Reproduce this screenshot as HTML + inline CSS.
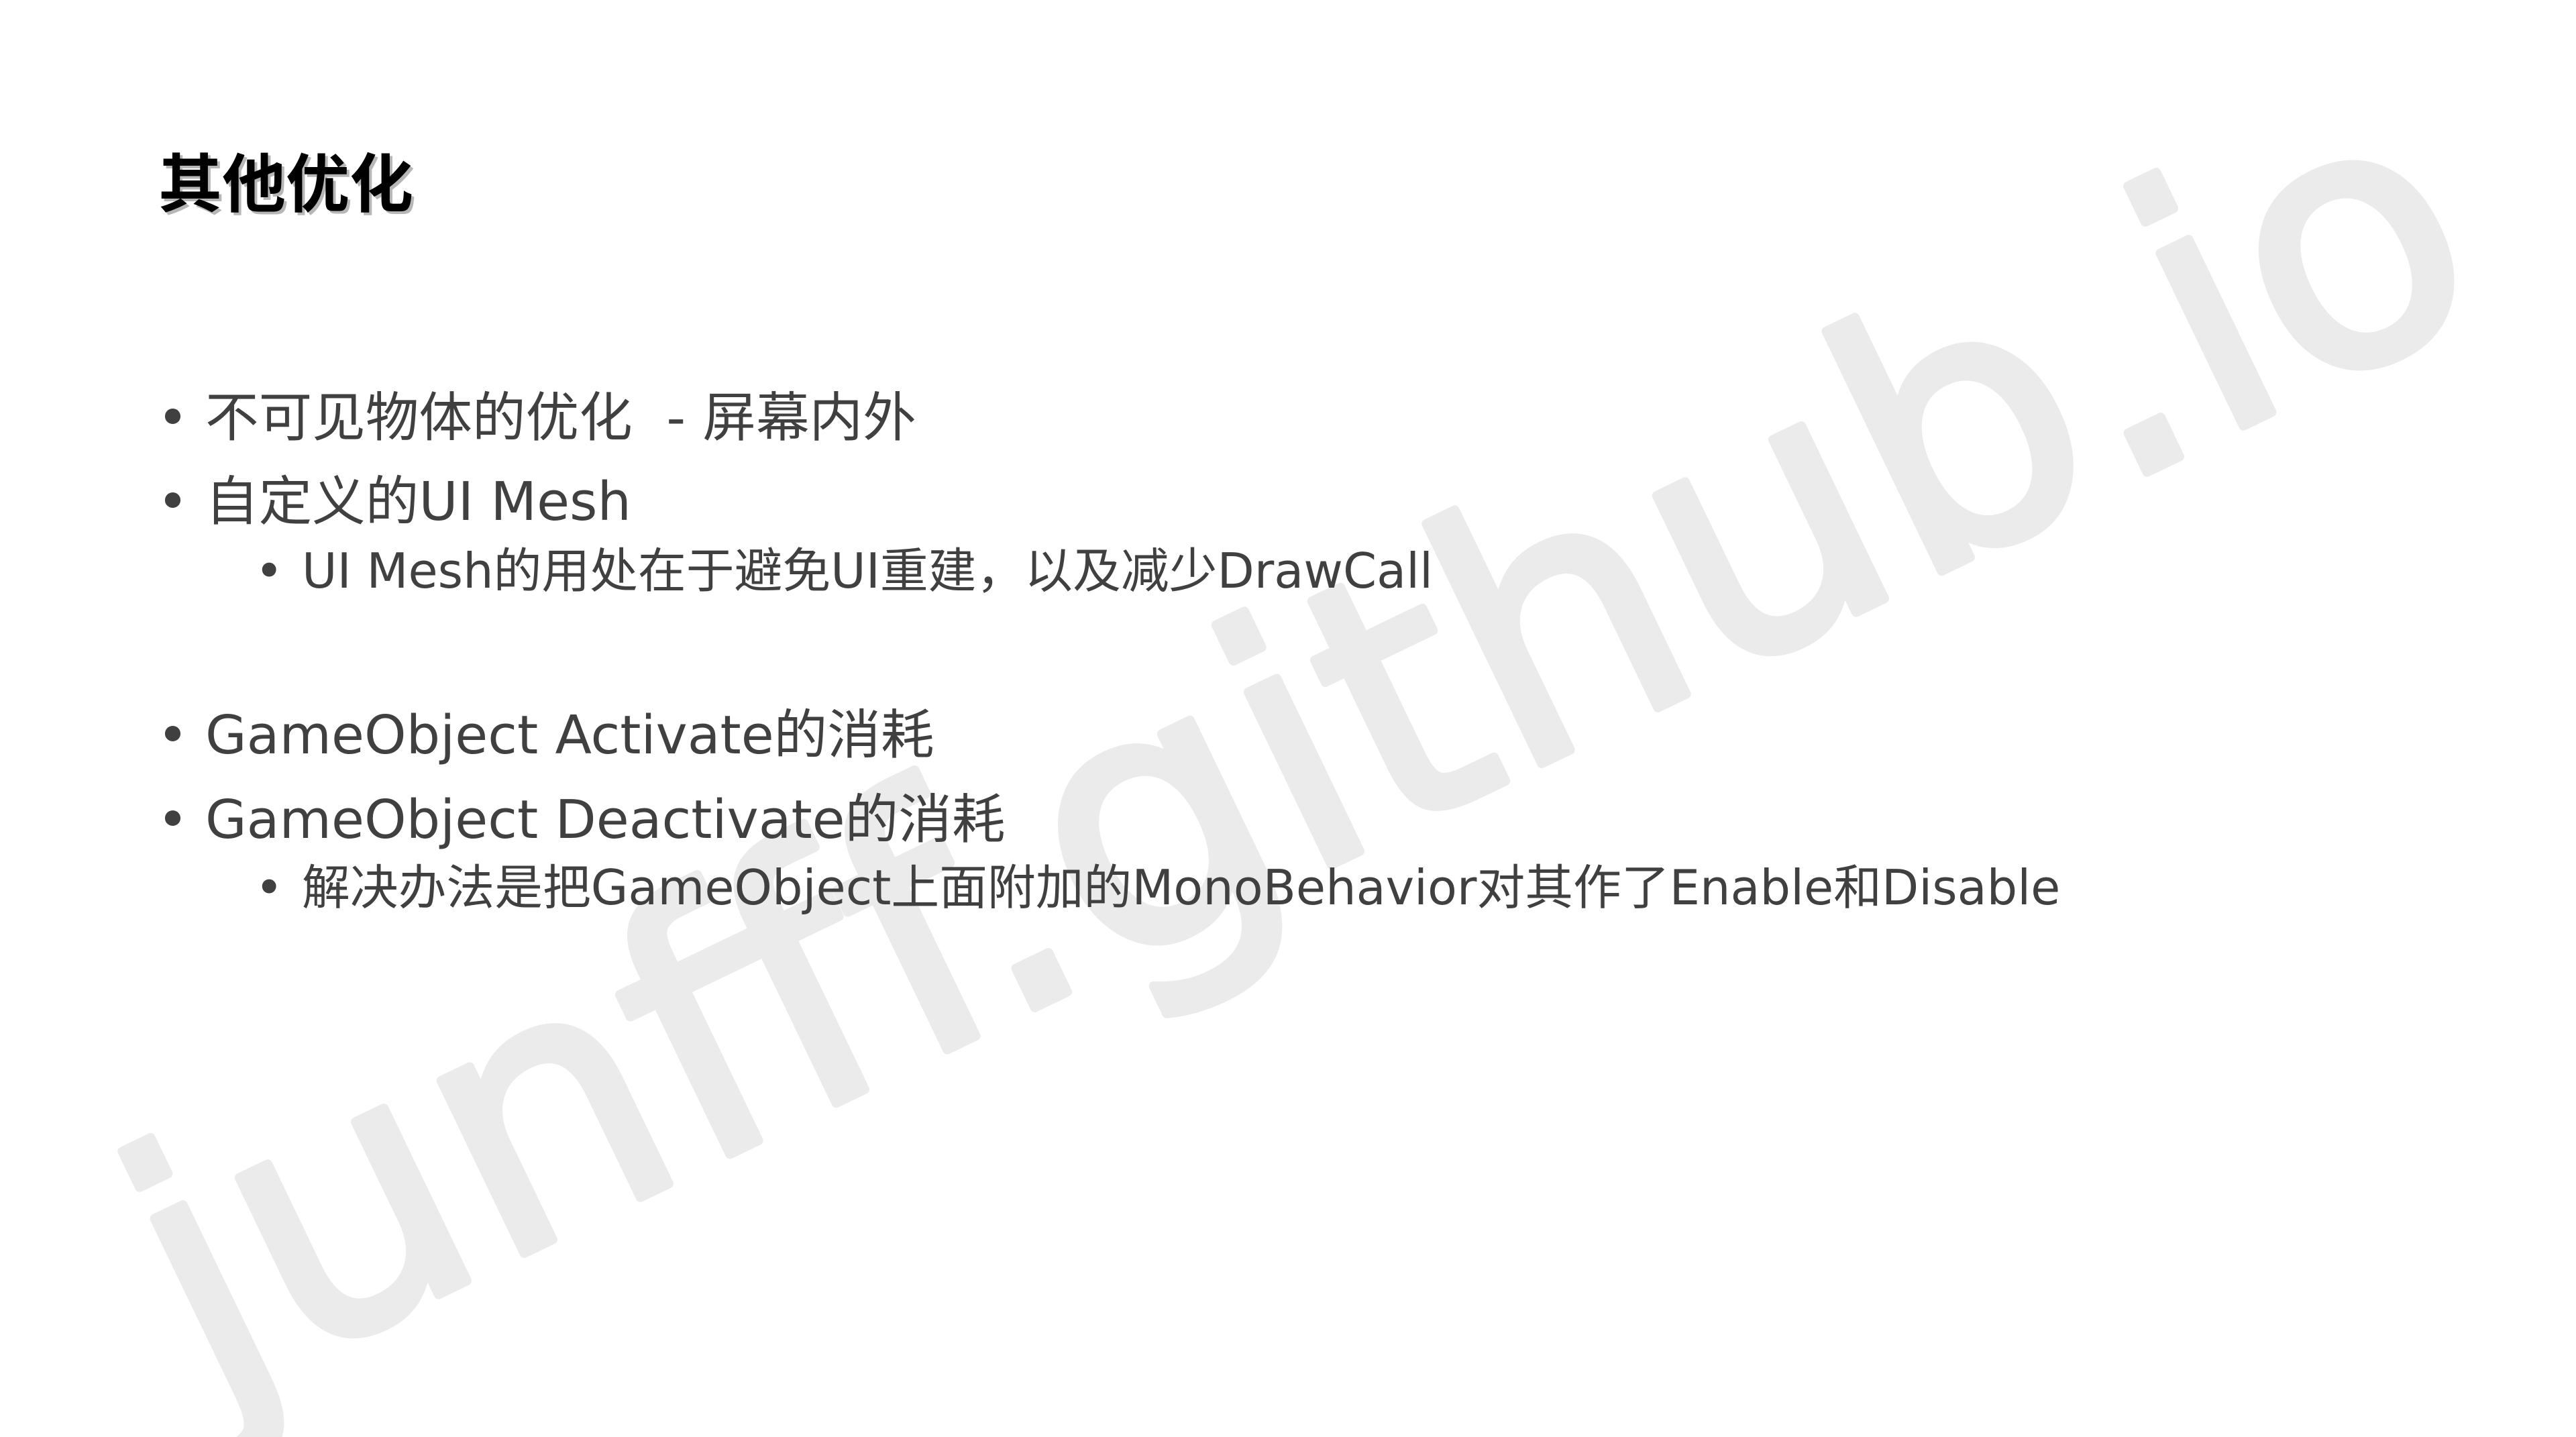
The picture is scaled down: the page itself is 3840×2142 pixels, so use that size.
<!DOCTYPE html>
<html><head><meta charset="utf-8"><style>
html,body{margin:0;padding:0;background:#fff;width:3840px;height:2142px;overflow:hidden}
svg{display:block}
.t{font-family:"DejaVu Sans","Noto Sans CJK SC",sans-serif;fill:#404040}
</style></head><body>
<svg width="3840" height="2142" viewBox="0 0 3840 2142" xmlns="http://www.w3.org/2000/svg">
<text transform="translate(310,2095) rotate(-25.7)" x="0" y="0" font-family="DejaVu Sans, sans-serif" font-size="522" fill="#ebebeb" stroke="#ebebeb" stroke-width="14" stroke-linejoin="round">junfff.github.io</text>
<text x="240" y="312" font-family="Noto Sans CJK SC, sans-serif" font-weight="bold" font-size="95" fill="#999" opacity="0.7">其他优化</text>
<text x="236" y="308" font-family="Noto Sans CJK SC, sans-serif" font-weight="bold" font-size="95" fill="#000">其他优化</text>
<g class="t" font-size="79.6">
<text x="234" y="650">•</text><text x="306" y="650">不可见物体的优化 &#160;- 屏幕内外</text>
<text x="234" y="775">•</text><text x="306" y="775">自定义的UI Mesh</text>
<text x="234" y="1123">•</text><text x="306" y="1123">GameObject Activate的消耗</text>
<text x="234" y="1249">•</text><text x="306" y="1249">GameObject Deactivate的消耗</text>
</g>
<g class="t" font-size="71.8">
<text x="380" y="876">•</text><text x="450" y="876">UI Mesh的用处在于避免UI重建，以及减少DrawCall</text>
<text x="380" y="1348">•</text><text x="450" y="1348">解决办法是把GameObject上面附加的MonoBehavior对其作了Enable和Disable</text>
</g>
</svg>
</body></html>
